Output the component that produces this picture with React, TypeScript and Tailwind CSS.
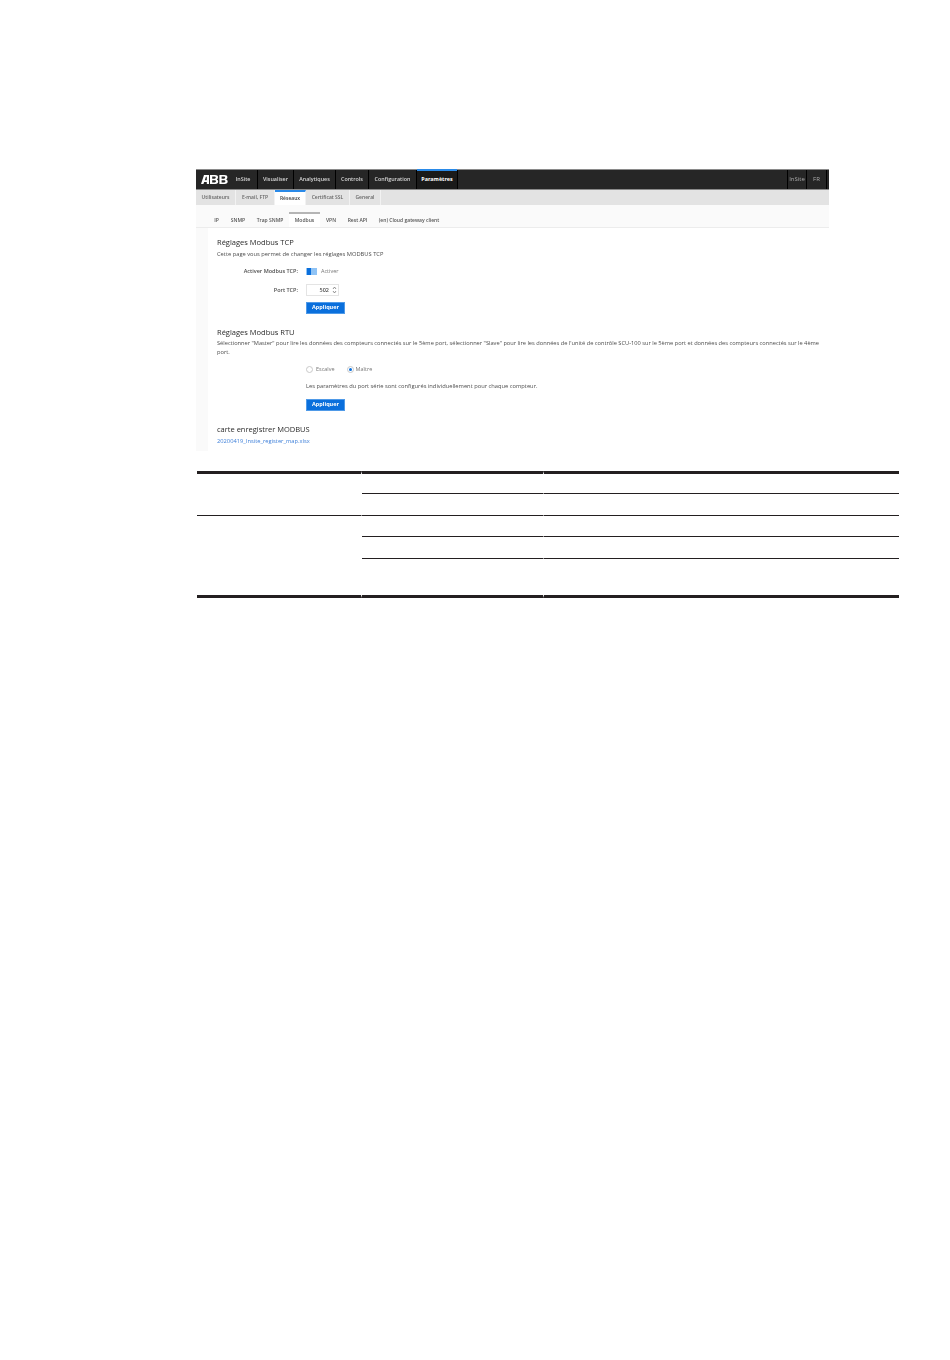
import React from 'react';

const mainNav = [
  { label: 'InSite', w: 'w-[29px]' },
  { label: 'Visualiser', w: 'w-[36px]' },
  { label: 'Analytiques', w: 'w-[42px]' },
  { label: 'Controls', w: 'w-[33px]' },
  { label: 'Configuration', w: 'w-[48px]' },
];

const subNav = [
  { label: 'Utilisateurs', w: 'w-[40px]' },
  { label: 'E-mail, FTP', w: 'w-[39px]' },
  { label: 'Réseaux', w: 'w-[31px]', active: true },
  { label: 'Certificat SSL', w: 'w-[44px]' },
  { label: 'General', w: 'w-[31px]' },
];

const tabs = [
  { label: 'IP', w: 'w-[17px]' },
  { label: 'SNMP', w: 'w-[26px]' },
  { label: 'Trap SNMP', w: 'w-[38px]' },
  { label: 'Modbus', w: 'w-[31px]', active: true },
  { label: 'VPN', w: 'w-[22px]' },
  { label: 'Rest API', w: 'w-[31px]' },
  { label: '(en) Cloud gateway client', w: 'w-[72px]' },
];

const AbbLogo = () => (
  <svg viewBox="0 0 27 9" className="h-[9px] w-[27px]" fill="#ffffff" fillRule="evenodd">
    <path d="M0 9 L3 0 H8 V9 H5.8 V7 H3.2 L2.4 9 Z M3.8 5.2 H5.8 V1.8 H4.9 Z" />
    <path d="M9 0 H14 Q17 0 17 2.3 Q17 3.8 15.8 4.5 Q17.2 5.1 17.2 6.6 Q17.2 9 14.2 9 H9 Z M11.2 1.6 V3.7 H13.6 Q14.8 3.7 14.8 2.6 Q14.8 1.6 13.6 1.6 Z M11.2 5.3 V7.4 H13.8 Q15 7.4 15 6.3 Q15 5.3 13.8 5.3 Z" />
    <path d="M18.4 0 H23.4 Q26.4 0 26.4 2.3 Q26.4 3.8 25.2 4.5 Q26.7 5.1 26.7 6.6 Q26.7 9 23.6 9 H18.4 Z M20.6 1.6 V3.7 H23 Q24.2 3.7 24.2 2.6 Q24.2 1.6 23 1.6 Z M20.6 5.3 V7.4 H23.2 Q24.4 7.4 24.4 6.3 Q24.4 5.3 23.2 5.3 Z" />
  </svg>
);

const ApplyButton = () => (
  <button className="block h-[12px] w-[39px] bg-[#0a6fdc] border border-[#4f9ae8] text-white text-[5.5px] font-bold leading-none">
    Appliquer
  </button>
);

const App: React.FC = () => {
  return (
    <div className="min-h-[1360px] bg-white pt-[169px] font-['Open_Sans',sans-serif] text-[#4d4d4d]">
      <div className="ml-[196px] w-[633px] blur-[0.3px]">
        {/* top bar */}
        <header className="flex h-[21px] items-stretch border-t border-b border-t-[#8a8a8a] border-b-[#8a8a8a] bg-[#262626] text-[5.4px] font-semibold text-[#d8d8d8]">
          <div className="flex w-[33px] items-center justify-end pr-[1px]">
            <AbbLogo />
          </div>
          {mainNav.map((item) => (
            <div key={item.label} className={`${item.w} flex items-center justify-center border-r border-black`}>
              {item.label}
            </div>
          ))}
          <div className="relative flex w-[41px] items-center justify-center border-r border-black bg-[#1a1a1a] font-bold text-white">
            <span className="absolute inset-x-0 -top-px h-[2px] bg-[#2a8ae8]" />
            Paramètres
          </div>
          <div className="ml-auto flex">
            <div className="flex w-[20px] items-center justify-center border-x border-black text-[6px] font-normal text-[#aaaaaa]">InSite</div>
            <div className="flex w-[20px] items-center justify-center border-r border-black text-[6px] font-normal text-[#aaaaaa]">FR</div>
            <div className="w-[2px]" />
          </div>
        </header>

        {/* second level nav */}
        <nav className="flex h-[15px] items-stretch bg-[#e3e3e3] text-[5px] font-semibold text-[#666666]">
          {subNav.map((item) => (
            <div
              key={item.label}
              className={`${item.w} flex items-center justify-center border-r border-[#f2f2f2] ${
                item.active ? 'border-t-2 border-t-[#2a8ae8] bg-white text-[#444444]' : ''
              }`}
            >
              {item.label}
            </div>
          ))}
        </nav>

        {/* third level tabs */}
        <div className="flex h-[23px] items-end border-b border-[#ececec] bg-[#fafafa] pl-[12px] text-[5px] font-semibold text-[#555555]">
          {tabs.map((item) => (
            <div
              key={item.label}
              className={`${item.w} flex h-[15px] items-center justify-center border-t-2 ${
                item.active ? 'border-t-[#b5b5b5] bg-white' : 'border-t-transparent'
              }`}
            >
              {item.label}
            </div>
          ))}
        </div>

        {/* page body */}
        <div className="flex h-[223px]">
          <div className="w-[12px] bg-[#fafafa]" />
          <main className="flex-1 pl-[9px] pr-[6px] pt-[9px]">
            <h2 className="text-[7.5px] leading-[10px] text-[#2b2b2b]">Réglages Modbus TCP</h2>
            <p className="mt-[3px] text-[5.75px] leading-[8px]">Cette page vous permet de changer les réglages MODBUS TCP</p>

            <div className="mt-[9px] flex h-[8px] items-center">
              <label className="w-[81px] text-right text-[5.5px] font-semibold">Activer Modbus TCP:</label>
              <div className="ml-[8px] flex h-[7px] w-[11px] bg-[#8fc3f5]">
                <span className="ml-[1px] h-[7px] w-[4px] bg-[#0a6fdc]" />
              </div>
              <span className="ml-[4px] text-[5.5px] text-[#777777]">Activer</span>
            </div>

            <div className="mt-[9px] flex h-[12px] items-center">
              <label className="w-[81px] text-right text-[5.5px] font-semibold">Port TCP:</label>
              <div className="ml-[8px] flex h-[12px] w-[33px] items-center justify-end gap-[3px] border border-[#e4e4e4] pr-[1px] text-[5.5px] font-semibold">
                502
                <svg viewBox="0 0 5 8" className="h-[8px] w-[5px]" fill="none" stroke="#666666" strokeWidth="0.7">
                  <path d="M1 3 L2.5 1 L4 3" />
                  <path d="M1 5 L2.5 7 L4 5" />
                </svg>
              </div>
            </div>

            <div className="ml-[89px] mt-[6px]">
              <ApplyButton />
            </div>

            <h2 className="mt-[13px] text-[7.5px] font-medium leading-[10px] text-[#2b2b2b]">Réglages Modbus RTU</h2>
            <p className="mt-[2px] text-[5.7px] leading-[8.5px]">
              Sélectionner "Master" pour lire les données des compteurs connectés sur le 5ème port, sélectionner "Slave" pour lire les données de l'unité de contrôle SCU-100 sur le 5ème port et données des compteurs connectés sur le 4ème port.
            </p>

            <div className="ml-[89px] mt-[9px] flex h-[8px] items-center text-[5.5px] text-[#777777]">
              <span className="h-[7px] w-[7px] rounded-full border border-[#c8c8c8] bg-white" />
              <span className="ml-[3px]">Escalve</span>
              <span className="ml-[12px] flex h-[7px] w-[7px] items-center justify-center rounded-full border border-[#c8c8c8] bg-white">
                <span className="h-[3px] w-[3px] rounded-full bg-[#0a6fdc]" />
              </span>
              <span className="ml-[2px]">Maître</span>
            </div>

            <p className="ml-[89px] mt-[9px] text-[5.75px] leading-[8px]">
              Les paramètres du port série sont configurés individuellement pour chaque compteur.
            </p>

            <div className="ml-[89px] mt-[9px]">
              <ApplyButton />
            </div>

            <h2 className="mt-[13px] text-[7.5px] font-medium leading-[10px] text-[#2b2b2b]">carte enregistrer MODBUS</h2>
            <a className="mt-[3px] block text-[5.75px] leading-[8px] text-[#3d7fd9]">20200419_Insite_register_map.xlsx</a>
          </main>
        </div>
      </div>

      {/* empty table under the screenshot */}
      <div className="ml-[197px] mt-[20px] grid w-[702px] grid-cols-[165px_182px_355px] grid-rows-[23px_22px_21px_22px_39px]">
        <div className="row-span-2 border-t-[3px] border-b border-r border-[#231f20] border-r-white" />
        <div className="border-t-[3px] border-b border-r border-[#231f20] border-r-white" />
        <div className="border-t-[3px] border-b border-[#231f20]" />
        <div className="border-b border-r border-[#231f20] border-r-white" />
        <div className="border-b border-[#231f20]" />
        <div className="row-span-3 border-b-[3px] border-r border-[#231f20] border-r-white" />
        <div className="border-b border-r border-[#231f20] border-r-white" />
        <div className="border-b border-[#231f20]" />
        <div className="border-b border-r border-[#231f20] border-r-white" />
        <div className="border-b border-[#231f20]" />
        <div className="border-b-[3px] border-r border-[#231f20] border-r-white" />
        <div className="border-b-[3px] border-[#231f20]" />
      </div>
    </div>
  );
};

export default App;
